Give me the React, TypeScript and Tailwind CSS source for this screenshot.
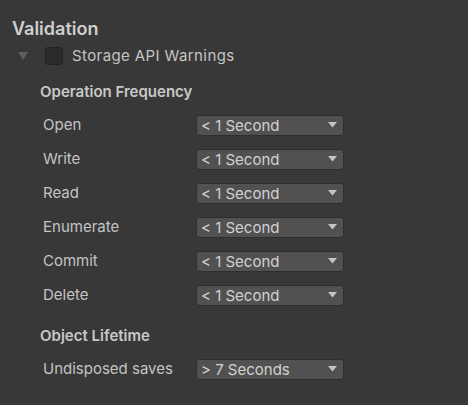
const rows1 = ["Open", "Write", "Read", "Enumerate", "Commit", "Delete"];

const Dropdown = ({ value }: { value: string }) => (
  <div className="flex shrink-0 items-center justify-between w-[148px] h-[21px] bg-[#515151] border border-[#2e2e2e] rounded-[3px] pl-[4px] pr-[6px] text-[15px] leading-none text-[#d2d2d2]">
    <span>{value}</span>
    <svg width="9" height="6" viewBox="0 0 9 6">
      <path d="M0 0 H9 L4.5 5.5 Z" fill="#c4c4c4" />
    </svg>
  </div>
);

const Row = ({ label, value }: { label: string; value: string }) => (
  <div className="flex items-center h-[34px]">
    <span className="w-[184px] shrink-0 whitespace-nowrap pl-[31px] pt-px text-[15px] text-[#c4c4c4]">
      {label}
    </span>
    <Dropdown value={value} />
  </div>
);

export default function App() {
  return (
    <div
      className="w-[468px] h-[405px] bg-[#383838] pl-[12px] pt-[18px] flex flex-col overflow-hidden"
      style={{ fontFamily: "Inter, 'Noto Sans', sans-serif" }}
    >
      <h1 className="text-[18px] leading-[22px] font-semibold text-[#cfcfcf]">Validation</h1>

      {/* foldout */}
      <div className="flex items-center h-[18px] mt-[7px]">
        <svg width="10" height="8" viewBox="0 0 10 8" className="ml-[6px]">
          <path d="M0 0 H10 L5 8 Z" fill="#5e5e5e" />
        </svg>
        <div className="w-[18px] h-[18px] ml-[17px] bg-[#2b2b2b] border border-[#222222] rounded-[3px]" />
        <span className="ml-[9px] text-[15px] tracking-[0.4px] text-[#c4c4c4]">Storage API Warnings</span>
      </div>

      <h2 className="mt-[18px] ml-[28px] text-[15px] leading-[18px] font-semibold text-[#c8c8c8]">
        Operation Frequency
      </h2>
      <div className="mt-[7px] flex flex-col">
        {rows1.map((r) => (
          <Row key={r} label={r} value="< 1 Second" />
        ))}
      </div>

      <h2 className="mt-[15px] ml-[28px] text-[15px] leading-[18px] font-semibold text-[#c8c8c8]">
        Object Lifetime
      </h2>
      <div className="mt-[7px]">
        <Row label="Undisposed saves" value="> 7 Seconds" />
      </div>
    </div>
  );
}
